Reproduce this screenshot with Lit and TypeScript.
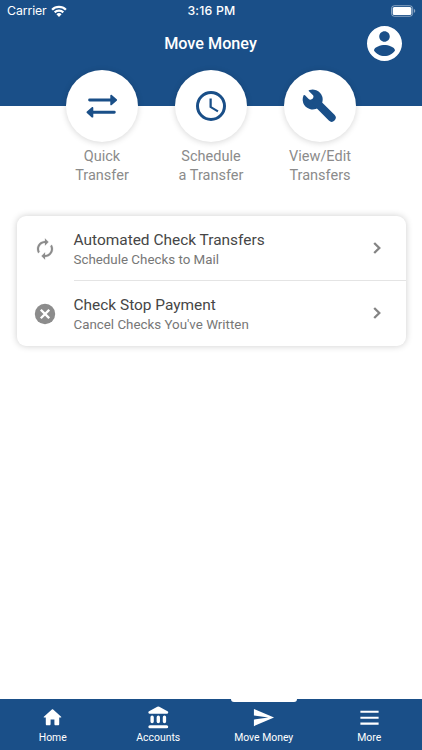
import { LitElement, html, svg, css } from "lit";
import { customElement, property } from "lit/decorators.js";

const icons: Record<string, { box: string; body: unknown }> = {
  wifi: {
    box: "0 0 16 12",
    body: svg`<path d="M.3 3.9a11 11 0 0 1 15.4 0L14.1 5.6a8.7 8.7 0 0 0-12.2 0zM2.9 6.6a7.3 7.3 0 0 1 10.2 0L11.5 8.3a5 5 0 0 0-7 0zM5.4 9.2a3.8 3.8 0 0 1 5.2 0L8 11.9z"/>`,
  },
  battery: {
    box: "0 0 26 12",
    body: svg`<rect x=".5" y=".5" width="22" height="11" rx="3" fill="none" stroke="currentColor" stroke-opacity=".5"/><rect x="1.8" y="1.8" width="19.4" height="8.4" rx="1.6"/><path d="M23.8 4v4c1-.4 1.4-1.2 1.4-2s-.4-1.6-1.4-2z" opacity=".5"/>`,
  },
  profile: {
    box: "2 2 20 20",
    body: svg`<path d="M12 2C6.48 2 2 6.48 2 12s4.48 10 10 10 10-4.48 10-10S17.52 2 12 2zm0 3c1.66 0 3 1.34 3 3s-1.34 3-3 3-3-1.34-3-3 1.34-3 3-3zm0 14.2c-2.5 0-4.71-1.28-6-3.22.03-1.99 4-3.08 6-3.08 1.99 0 5.97 1.09 6 3.08-1.29 1.94-3.5 3.22-6 3.22z"/>`,
  },
  swap: {
    box: "0 0 36 36",
    body: svg`<path d="M5.6 12H27M9 24.3h21.3" stroke="currentColor" stroke-width="2.9" stroke-linecap="round"/><path d="M26.3 7.6c0-.8.9-1.2 1.5-.7l4.9 4.3c.5.4.5 1.2 0 1.6l-4.9 4.3c-.6.5-1.5.1-1.5-.7zM9.3 19.9c0-.8-.9-1.2-1.5-.7l-4.9 4.3c-.5.4-.5 1.2 0 1.6l4.9 4.3c.6.5 1.5.1 1.5-.7z"/>`,
  },
  clock: {
    box: "0 0 24 24",
    body: svg`<path d="M12 2a10 10 0 1 0 0 20 10 10 0 0 0 0-20zm0 18a8 8 0 1 1 0-16 8 8 0 0 1 0 16zm.5-13H11v6l5.25 3.15.75-1.23-4.5-2.67z"/>`,
  },
  wrench: {
    box: "18 18 108 108",
    body: svg`<path d="M41 24Q36 25 39 28L51 40Q53 42 52 46L51 49Q50 51 47 52L43 53Q40 53 38 51L27 40Q23 37 22 42A30 30 0 1 0 41 24Z"/><path d="M63 63 107 107" stroke="currentColor" stroke-width="24" stroke-linecap="round"/>`,
  },
  renew: {
    box: "0 0 24 24",
    body: svg`<path stroke="currentColor" stroke-width=".2" stroke-linejoin="round" d="M12 6v2.5l3.5-3.5-3.5-3.5v2.5c-4.42 0-8 3.58-8 8 0 1.57.46 3.03 1.24 4.26L6.7 14.8A5.87 5.87 0 0 1 6 12c0-3.31 2.69-6 6-6zm6.76 1.74L17.3 9.2c.44.84.7 1.79.7 2.8 0 3.31-2.69 6-6 6v-2.5l-3.5 3.5 3.5 3.5v-2.5c4.42 0 8-3.58 8-8 0-1.57-.46-3.03-1.24-4.26z"/>`,
  },
  cancel: {
    box: "0 0 24 24",
    body: svg`<circle cx="12" cy="12" r="10.2"/><path d="M8.6 8.6 15.4 15.4M15.4 8.6 8.6 15.4" stroke="#fff" stroke-width="2.3" stroke-linecap="square"/>`,
  },
  chevron: {
    box: "0 0 24 24",
    body: svg`<path d="M9.2 7 14.3 12 9.2 17" fill="none" stroke="currentColor" stroke-width="2.3"/>`,
  },
  home: {
    box: "0 0 24 24",
    body: svg`<path d="M10 19v-5h4v5c0 .55.45 1 1 1h3c.55 0 1-.45 1-1v-7h1.7c.46 0 .68-.57.33-.87L12.67 3.6c-.38-.34-.96-.34-1.34 0l-8.36 7.53c-.34.3-.13.87.33.87H5v7c0 .55.45 1 1 1h3c.55 0 1-.45 1-1z"/>`,
  },
  bank: {
    box: "0.7 0.7 22 22",
    body: svg`<path d="M4 11.5v4a1.6 1.6 0 0 0 3.2 0v-4a1.6 1.6 0 0 0-3.2 0zm5.9 0v4a1.6 1.6 0 0 0 3.2 0v-4a1.6 1.6 0 0 0-3.2 0zM3.5 22h16a1.5 1.5 0 0 0 0-3h-16a1.5 1.5 0 0 0 0 3zM15.8 11.5v4a1.6 1.6 0 0 0 3.2 0v-4a1.6 1.6 0 0 0-3.2 0zM10.57 1.49l-7.9 4.16A1.24 1.24 0 0 0 3.25 8h16.51a1.24 1.24 0 0 0 .57-2.35l-7.9-4.16a2 2 0 0 0-1.86 0z"/>`,
  },
  send: {
    box: "0 0 24 24",
    body: svg`<path d="M2.01 21L23 12 2.01 3 2 10l15 2-15 2z"/>`,
  },
  menu: {
    box: "0 0 24 24",
    body: svg`<path d="M2.5 6h19M2.5 12.2h19M2.5 18.4h19" fill="none" stroke="currentColor" stroke-width="2.2"/>`,
  },
};

@customElement("ui-icon")
class UiIcon extends LitElement {
  @property() name = "";
  static styles = css`
    :host { display: block; flex: none; }
    svg { display: block; width: 100%; height: 100%; fill: currentColor; }
  `;
  render() {
    const icon = icons[this.name];
    return html`<svg viewBox=${icon.box} aria-hidden="true">${icon.body}</svg>`;
  }
}

const actions = [
  { icon: "swap", lines: ["Quick", "Transfer"] },
  { icon: "clock", lines: ["Schedule", "a Transfer"] },
  { icon: "wrench", lines: ["View/Edit", "Transfers"] },
];

const rows = [
  { icon: "renew", title: "Automated Check Transfers", note: "Schedule Checks to Mail" },
  { icon: "cancel", title: "Check Stop Payment", note: "Cancel Checks You've Written" },
];

const tabs = [
  { icon: "home", label: "Home" },
  { icon: "bank", label: "Accounts" },
  { icon: "send", label: "Move Money", active: true },
  { icon: "menu", label: "More" },
];

@customElement("app-root")
class AppRoot extends LitElement {
  static styles = css`
    :host {
      display: flex;
      flex-direction: column;
      height: 750px;
      background: #fff;
      font-family: Roboto, sans-serif;
      overflow: hidden;
    }
    * { box-sizing: border-box; }
    header { height: 106px; flex: none; background: #1a4f88; color: #fff; }
    .status {
      display: grid;
      grid-template-columns: 1fr auto 1fr;
      align-items: center;
      height: 22px;
      padding: 0 6px 0 7px;
      font: 400 12.3px/22px Inter, sans-serif;
    }
    .carrier { display: flex; align-items: center; gap: 4px; letter-spacing: -0.1px; }
    .wifi { width: 16px; height: 12px; margin-top: -1px; }
    .time { font-weight: 500; letter-spacing: 0.2px; }
    .battery { width: 25px; height: 12px; justify-self: end; }
    .bar {
      display: grid;
      grid-template-columns: 1fr auto 1fr;
      align-items: center;
      height: 42px;
      padding-right: 20px;
    }
    h1 {
      grid-column: 2;
      margin: 1px -10px 0 9px;
      font-size: 16.2px;
      line-height: 20px;
      font-weight: 500;
    }
    .profile { width: 35px; height: 35px; justify-self: end; }
    .actions {
      display: flex;
      justify-content: center;
      gap: 1px;
      margin-top: -36px;
    }
    .action {
      width: 108px;
      display: flex;
      flex-direction: column;
      align-items: center;
      color: #8b8b8b;
      font-size: 14.5px;
      line-height: 19px;
      text-align: center;
    }
    .disc {
      display: grid;
      place-items: center;
      width: 72px;
      height: 72px;
      margin-bottom: 5px;
      border-radius: 50%;
      background: #fff;
      color: #1a4f88;
      box-shadow: 0 1px 6px rgba(0, 0, 0, 0.16);
    }
    .disc ui-icon { width: 36px; height: 36px; }
    .card {
      margin: 31px 16.5px 0;
      border-radius: 9px;
      background: #fff;
      box-shadow: 0 0 7px rgba(0, 0, 0, 0.2);
    }
    .row { display: flex; height: 65px; padding-left: 16.5px; align-items: center; }
    .row > ui-icon { width: 24px; height: 24px; color: #8c8c8c; }
    .cell {
      display: flex;
      align-items: center;
      justify-content: space-between;
      flex: 1;
      height: 65px;
      margin-left: 16.5px;
      padding-right: 16.5px;
    }
    .row + .row .cell { border-top: 1px solid #e4e4e4; margin-top: -1px; height: 66px; }
    .text { padding-top: 2px; }
    .title { font-size: 15.45px; line-height: 19px; color: #464646; }
    .note { font-size: 13.35px; line-height: 19px; color: #777; }
    .go { width: 24px; height: 24px; color: #848484; margin-top: -1px; }
    nav {
      display: grid;
      grid-template-columns: repeat(4, 1fr);
      height: 51px;
      margin-top: auto;
      background: #1a4f88;
      color: #fff;
    }
    .tab {
      position: relative;
      display: flex;
      flex-direction: column;
      align-items: center;
      padding-top: 7px;
      font-size: 10.4px;
      line-height: 14px;
    }
    .tab ui-icon { width: 23px; height: 23px; margin-bottom: 2px; }
    .active::before {
      content: "";
      position: absolute;
      top: 0;
      width: 66px;
      height: 3px;
      border-radius: 0 0 3px 3px;
      background: #fff;
    }
  `;

  render() {
    return html`
      <header>
        <div class="status">
          <div class="carrier">Carrier<ui-icon class="wifi" name="wifi"></ui-icon></div>
          <div class="time">3:16 PM</div>
          <ui-icon class="battery" name="battery"></ui-icon>
        </div>
        <div class="bar">
          <h1>Move Money</h1>
          <ui-icon class="profile" name="profile"></ui-icon>
        </div>
      </header>
      <div class="actions">
        ${actions.map((a) => html`
          <div class="action">
            <div class="disc"><ui-icon name=${a.icon}></ui-icon></div>
            ${a.lines.map((line) => html`<div>${line}</div>`)}
          </div>`)}
      </div>
      <div class="card">
        ${rows.map((r) => html`
          <div class="row">
            <ui-icon name=${r.icon}></ui-icon>
            <div class="cell">
              <div class="text">
                <div class="title">${r.title}</div>
                <div class="note">${r.note}</div>
              </div>
              <ui-icon class="go" name="chevron"></ui-icon>
            </div>
          </div>`)}
      </div>
      <nav>
        ${tabs.map((t) => html`
          <div class="tab ${t.active ? "active" : ""}">
            <ui-icon name=${t.icon}></ui-icon>
            <div>${t.label}</div>
          </div>`)}
      </nav>
    `;
  }
}
